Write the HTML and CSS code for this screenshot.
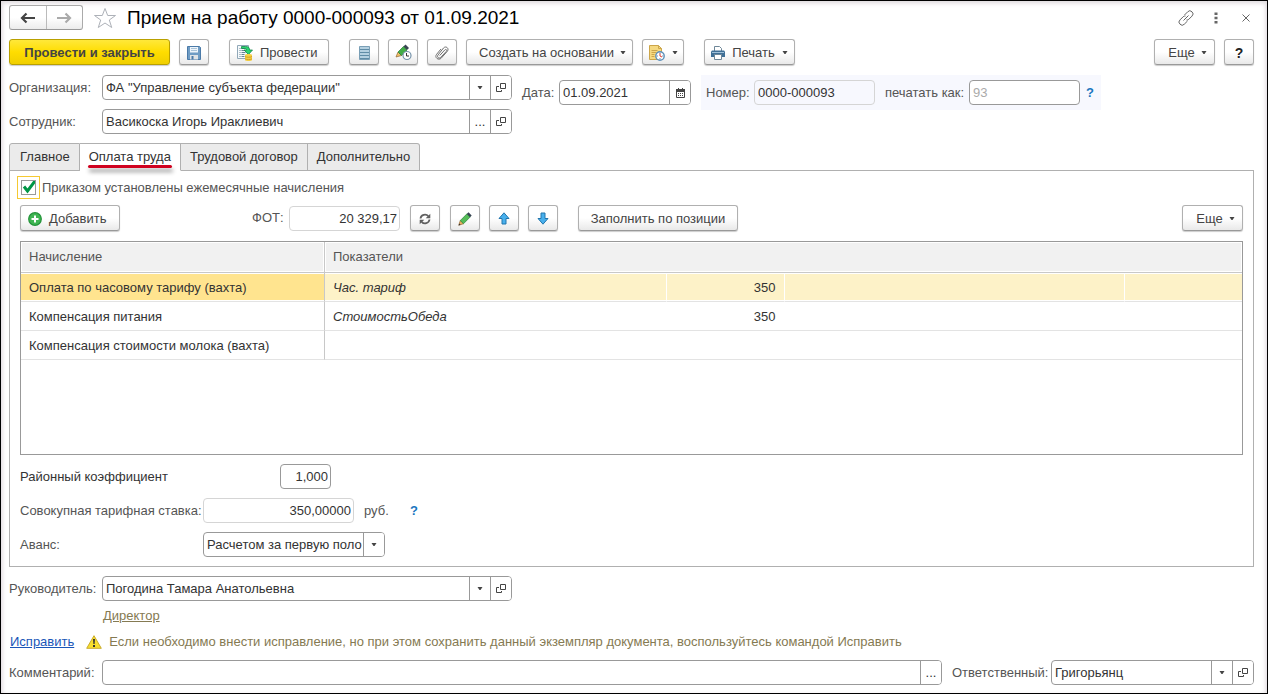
FILE: index.html
```html
<!DOCTYPE html>
<html lang="ru">
<head>
<meta charset="utf-8">
<meta name="viewport" content="width=device-width, initial-scale=1">
<title>Прием на работу</title>
<link rel="stylesheet" href="styles.css">
</head>
<body>
<svg class="sprite" aria-hidden="true">
  <symbol id="i-open" viewBox="0 0 11 11"><path d="M4.500 1.500h5v5h-5zM3 4.500H.5v5h5V8" fill="none" stroke="#444"/></symbol>
  <symbol id="i-caret" viewBox="0 0 6 4"><path d="M.5 0h5L3.500 3h-1z" fill="#444"/></symbol>
</svg>
<main class="window">
  <header class="titlebar">
    <div class="nav">
      <button type="button" aria-label="Назад"><svg width="16" height="12" viewBox="0 0 16 12"><path d="M2 6h13M6.500 1.500 2 6l4.500 4.500" fill="none" stroke="#444" stroke-width="2.200"/></svg></button>
      <button type="button" aria-label="Вперед"><svg width="16" height="12" viewBox="0 0 16 12"><path d="M1 6h13M9.500 1.500 14 6l-4.500 4.500" fill="none" stroke="#aaa" stroke-width="2.200"/></svg></button>
    </div>
    <button type="button" class="plain star" aria-label="Избранное"><svg width="24" height="22" viewBox="0 0 24 22"><path d="M12 1.500 14.700 8.500H22.500L16.300 13 18.700 20.500 12 16 5.300 20.500 7.700 13 1.500 8.500H9.300Z" fill="#fff" stroke="#adb1b8"/></svg></button>
    <h1>Прием на работу 0000-000093 от 01.09.2021</h1>
    <div class="win-actions">
      <button type="button" class="plain" aria-label="Ссылка"><svg width="16" height="16" viewBox="0 0 16 16"><g fill="none" stroke="#666"><path d="M6.500 5 9.700 1.800a2.900 2.900 0 0 1 4.300 0 2.900 2.900 0 0 1 0 4.300L10.800 9.300a2.700 2.700 0 0 1-2.300.7"/><path d="M9.500 11 6.300 14.200a2.900 2.900 0 0 1-4.300 0 2.900 2.900 0 0 1 0-4.300L5.200 6.700A2.700 2.700 0 0 1 7.500 6M5.500 10.500l5-5"/></g></svg></button>
      <button type="button" class="plain" aria-label="Меню"><svg width="4" height="12" viewBox="0 0 4 12"><path d="M.5.5h3v2.500h-3zM.5 4.700h3v2.500h-3zM.5 9h3v2.500h-3z" fill="#666"/></svg></button>
      <button type="button" class="plain" aria-label="Закрыть"><svg width="8" height="8" viewBox="0 0 8 8"><path d="m.5.5 7 7m0-7-7 7" stroke="#666"/></svg></button>
    </div>
  </header>

  <div class="toolbar">
    <button type="button" class="btn primary">Провести и закрыть</button>
    <button type="button" class="btn icon" aria-label="Записать"><svg width="14" height="14" viewBox="0 0 14 14"><path d="M.5.500h12l1 1v12H.5z" fill="#6f9cc4" stroke="#4a7aa8"/><path d="M3 1h8v5.500H3z" fill="#eef5fb"/><path d="M4 2.500h6M4 4.500h6" stroke="#a9c3d8"/><path d="M3 9h8v4.500H3z" fill="#dfe3e6"/><path d="M4.500 10h2v3.500h-2z" fill="#4a7aa8"/></svg></button>
    <button type="button" class="btn post apart"><svg width="16" height="16" viewBox="0 0 16 16"><path d="M.5.500h11v13H.5z" fill="#f5f9fb" stroke="#91a8b8"/><path d="M2.500 3.500h1m1 0h4m-6 2h1m1 0h4m-6 2h1m1 0h4m-6 2h1m1 0h3m-5 2h1m1 0h3" stroke="#678296"/><path d="M4.500 1.500h4c3 0 4 1 4 3.500h3L11.500 9.500 7 5h2.500c0-1.200-.5-1.500-2-1.500h-3z" fill="#28d66f" stroke="#18834a" stroke-width=".8"/><path d="M8 10c0-1.300 7-1.300 7 0v5c0 1.300-7 1.300-7 0z" fill="#f4cf46"/><path d="M8 11.500c1 1 6 1 7 0m-7 2.300c1 1 6 1 7 0" fill="none" stroke="#c9951c" stroke-width=".8"/></svg>Провести</button>
    <button type="button" class="btn icon apart" aria-label="Реестр"><svg width="11" height="14" viewBox="0 0 11 14"><path d="M.5.500h10v13H.5z" fill="#b4d0e0" stroke="#7a9fb6"/><path d="M1 3.500h9M1 6.500h9M1 9.500h9M1 12.500h9" stroke="#5f8ca6"/></svg></button>
    <button type="button" class="btn icon" aria-label="Изменить с датой"><svg width="17" height="17" viewBox="0 0 17 17"><path d="m1 13 2-5 3.500 3.500z" fill="#f2c268" stroke="#8f6530" stroke-width=".7"/><path d="m3 8 5.500-5.500L12 6l-5.500 5.500z" fill="#43ad48" stroke="#267a35" stroke-width=".7"/><path d="m8.500 2.500 2-2 3.500 3.500-2 2z" fill="#394552"/><circle cx="12" cy="11.500" r="4" fill="#fff" stroke="#7592aa" stroke-width="1.200"/><path d="M11.500 9v3h2.500" fill="none" stroke="#333"/></svg></button>
    <button type="button" class="btn icon" aria-label="Файлы"><svg width="14" height="14" viewBox="0 0 14 14"><path d="m4.700 9.500 5-5.500c1.300-1.300 2.600 0 1.500 1.500L5.700 11.500c-1.900 1.500-4.200-.5-2.700-2.500L8.500 2c2.300-2.500 6 .3 3.900 3.200L6.200 12.200C3.500 14.800-.9 11.500 1.600 8.300L6 3" fill="none" stroke="#707070"/></svg></button>
    <button type="button" class="btn create">Создать на основании<svg class="caret"><use href="#i-caret"/></svg></button>
    <button type="button" class="btn dated" aria-label="Напоминание"><svg width="16" height="16" viewBox="0 0 16 16"><path d="M.5.500h9l3 3v11H.5z" fill="#f5d981" stroke="#cca64a"/><path d="M9.500.5v3h3M2.500 5.500h6m-6 2h5m-5 2h3m-3 2h3" fill="none" stroke="#cca64a"/><circle cx="11" cy="11" r="4.200" fill="#fff" stroke="#5b8fb9" stroke-width="1.400"/><path d="M11 7.800v1m0 4.400v1M7.800 11h1m4.400 0h1" stroke="#587b98"/><path d="M11 8.500V11l2 1" fill="none" stroke="#df3c2f"/></svg><svg class="caret"><use href="#i-caret"/></svg></button>
    <button type="button" class="btn print apart"><svg width="14" height="14" viewBox="0 0 14 14"><path d="M3.500 5V.500h5l2 2V5" fill="#fff" stroke="#6e8798"/><path d="M1 4.500h12l1 1V11H0V5.500z" fill="#3f6f96"/><path d="M1 6.500h12" stroke="#9fc0d8"/><path d="M3.500 8.500h7v5h-7z" fill="#fff" stroke="#6e8798"/></svg>Печать<svg class="caret"><use href="#i-caret"/></svg></button>
    <button type="button" class="btn more push">Еще<svg class="caret"><use href="#i-caret"/></svg></button>
    <button type="button" class="btn icon help">?</button>
  </div>

  <section class="head">
    <div class="head-main">
      <div class="row"><label class="w-main" for="org">Организация:</label><div class="field wide"><input id="org" value="ФА &quot;Управление субъекта федерации&quot;"><button type="button" aria-label="Выбрать организацию"><svg class="caret"><use href="#i-caret"/></svg></button><button type="button" aria-label="Открыть организацию"><svg class="open"><use href="#i-open"/></svg></button></div></div>
      <div class="row"><label class="w-main" for="emp">Сотрудник:</label><div class="field wide"><input id="emp" value="Васикоска Игорь Ираклиевич"><button type="button" aria-label="Выбрать сотрудника">...</button><button type="button" aria-label="Открыть сотрудника"><svg class="open"><use href="#i-open"/></svg></button></div></div>
    </div>
    <div class="row date-row"><label class="w-date" for="date">Дата:</label><div class="field date"><input id="date" value="01.09.2021"><button type="button" aria-label="Календарь"><svg width="9" height="10" viewBox="0 0 9 10"><path d="M.5 1.500h8v8h-8z" fill="#fff" stroke="#444"/><path d="M0 1h9v3H0zM2 0h1v1H2zM6 0h1v1H6z" fill="#444"/><path d="M2 5.500h1m1 0h1m1 0h1m-5 2h1m1 0h1m1 0h1" stroke="#444"/></svg></button></div></div>
    <div class="number">
      <label class="w-num" for="num">Номер:</label><div class="field muted num"><input id="num" value="0000-000093" readonly></div>
      <label class="w-print" for="printas">печатать как:</label><div class="field printas"><input id="printas" placeholder="93"></div>
      <button type="button" class="plain hint">?</button>
    </div>
  </section>

  <nav class="tabs" role="tablist">
    <button type="button" role="tab">Главное</button>
    <button type="button" role="tab" class="active" aria-selected="true">Оплата труда</button>
    <button type="button" role="tab">Трудовой договор</button>
    <button type="button" role="tab">Дополнительно</button>
  </nav>

  <section class="panel">
    <div class="check"><input type="checkbox" id="monthly" checked><label for="monthly">Приказом установлены ежемесячные начисления</label></div>
    <div class="toolbar commands">
      <button type="button" class="btn add"><svg width="14" height="14" viewBox="0 0 14 14"><circle cx="7" cy="7" r="6.300" fill="#3fb552" stroke="#239239" stroke-width="1.200"/><path d="M7 3.500v7M3.500 7h7" stroke="#fff" stroke-width="2"/></svg>Добавить</button>
      <div class="row fot"><label class="w-fot" for="fot">ФОТ:</label><div class="field muted sum"><input id="fot" value="20 329,17" readonly></div></div>
      <button type="button" class="btn icon" aria-label="Обновить"><svg width="12" height="12" viewBox="0 0 12 12"><path d="M1.500 5.500C2 1.500 7 .5 9.300 3.200M10.500 6.500C10 10.500 5 11.500 2.700 8.800" fill="none" stroke="#606060" stroke-width="1.800"/><path d="M11.300.7v4.600H6.700zM.7 11.300V6.700h4.600z" fill="#606060"/></svg></button>
      <button type="button" class="btn icon edit" aria-label="Изменить"><svg width="14" height="14" viewBox="0 0 14 14"><path d="m.8 13.200 1.500-4.700 3.200 3.200z" fill="#eab464" stroke="#946329" stroke-width=".7"/><path d="M2.300 8.500 9 1.800 12.200 5l-6.700 6.700z" fill="#55bd59" stroke="#2c8639" stroke-width=".7"/><path d="m8.800 2 1.700-1.700 3.200 3.200L12 5.200z" fill="#364452"/><path d="m.6 13.400.6-2 1.400 1.400z" fill="#333"/></svg></button>
      <button type="button" class="btn icon" aria-label="Вверх"><svg width="12" height="13" viewBox="0 0 12 13"><path d="m6 .8 5 5.700H8v5.500H4V6.500H1z" fill="#48b0ed" stroke="#2376ad"/></svg></button>
      <button type="button" class="btn icon" aria-label="Вниз"><svg width="12" height="13" viewBox="0 0 12 13"><path d="m6 12.200 5-5.700H8V1H4v5.500H1z" fill="#48b0ed" stroke="#2376ad"/></svg></button>
      <button type="button" class="btn fill apart">Заполнить по позиции</button>
      <button type="button" class="btn more push">Еще<svg class="caret"><use href="#i-caret"/></svg></button>
    </div>
    <div class="grid">
      <table>
        <colgroup><col class="c-name"><col><col class="c-val"><col><col class="c-val"></colgroup>
        <thead><tr><th>Начисление</th><th colspan="4">Показатели</th></tr></thead>
        <tbody>
          <tr class="selected"><td>Оплата по часовому тарифу (вахта)</td><td class="ind">Час. тариф</td><td class="val">350</td><td></td><td></td></tr>
          <tr><td>Компенсация питания</td><td class="ind">СтоимостьОбеда</td><td class="val">350</td><td></td><td></td></tr>
          <tr><td>Компенсация стоимости молока (вахта)</td><td></td><td></td><td></td><td></td></tr>
        </tbody>
      </table>
    </div>
    <div class="totals">
      <div class="row"><label class="w-coef" for="coef">Районный коэффициент</label><div class="field coef"><input id="coef" value="1,000"></div></div>
      <div class="row"><label class="w-rate" for="rate">Совокупная тарифная ставка:</label><div class="field muted rate"><input id="rate" value="350,00000" readonly></div><span class="unit">руб.</span><button type="button" class="plain hint">?</button></div>
      <div class="row"><label class="w-rate" for="advance">Аванс:</label><div class="field advance"><select id="advance"><option>Расчетом за первую половину месяца</option></select><span class="drop"><svg class="caret"><use href="#i-caret"/></svg></span></div></div>
    </div>
  </section>

  <footer>
    <div class="row"><label class="w-main" for="boss">Руководитель:</label><div class="field wide"><input id="boss" value="Погодина Тамара Анатольевна"><button type="button" aria-label="Выбрать руководителя"><svg class="caret"><use href="#i-caret"/></svg></button><button type="button" aria-label="Открыть руководителя"><svg class="open"><use href="#i-open"/></svg></button></div></div>
    <a class="position" href="#">Директор</a>
    <div class="fix"><a href="#">Исправить</a><svg width="16" height="14" viewBox="0 0 16 14"><path d="M8 .7 15.300 13.300H.7z" fill="#f7de2d" stroke="#c9ab2e" stroke-linejoin="round"/><path d="M7 4h2l-.4 5H7.400zM7 10h2v2H7z" fill="#333"/></svg><span>Если необходимо внести исправление, но при этом сохранить данный экземпляр документа, воспользуйтесь командой Исправить</span></div>
    <div class="row"><label class="w-main" for="comment">Комментарий:</label><div class="field grow"><input id="comment"><button type="button" aria-label="Открыть комментарий">...</button></div><label class="w-resp" for="resp">Ответственный:</label><div class="field resp"><input id="resp" value="Григорьянц"><button type="button" aria-label="Выбрать ответственного"><svg class="caret"><use href="#i-caret"/></svg></button><button type="button" aria-label="Открыть ответственного"><svg class="open"><use href="#i-open"/></svg></button></div></div>
  </footer>
</main>
</body>
</html>
```

FILE: styles.css
```css
* { box-sizing: border-box; }
body {
  margin: 0;
  font: 13px/16px "Liberation Sans", Arial, sans-serif;
  color: #333;
  background: #fff;
}
button, input, select { font: inherit; color: inherit; margin: 0; }
button { padding: 0; cursor: pointer; }
svg { display: block; flex: none; }
.sprite { position: absolute; width: 0; height: 0; }
.caret { width: 6px; height: 4px; }
.open { width: 11px; height: 11px; }

.window {
  display: flex;
  flex-direction: column;
  min-height: 100vh;
  padding: 4px 13px 8px 8px;
  border: 1px solid #000;
  box-shadow: inset 0 4px 5px -2px #ddd8dc, inset 4px 0 5px -3px #ddd8dc, inset -4px 0 5px -3px #ddd8dc;
}

.titlebar { display: flex; align-items: center; height: 25px; margin-bottom: 9px; }
.nav { display: flex; width: 74px; height: 25px; border: 1px solid #aaa; border-bottom-color: #999; border-radius: 3px; background: linear-gradient(#fff 50%, #ececec); }
.nav button { flex: 1; display: grid; place-items: center; border: 0; background: none; }
.nav button + button { border-left: 1px solid #bbb; }
.plain { border: 0; background: none; display: grid; place-items: center; }
.star { margin: 0 10px; }
h1 { margin: 0; font-size: 19px; line-height: 24px; font-weight: 400; color: #000; }
.win-actions { display: flex; align-items: center; gap: 14px; margin-left: auto; }
.win-actions .plain { width: 16px; height: 16px; }

.toolbar { display: flex; gap: 9px; height: 26px; margin-bottom: 10px; }
.btn {
  display: flex;
  align-items: center;
  justify-content: center;
  height: 26px;
  padding-top: 1px;
  border: 1px solid #b0b0b0;
  border-bottom-color: #999;
  border-radius: 3px;
  background: linear-gradient(#fff 50%, #e9e9e9);
  box-shadow: 0 1px 1px #ccc;
  color: #444;
  white-space: nowrap;
}
.icon { width: 30px; }
.primary { width: 161px; font-weight: 700; border-color: #b9a000; background: linear-gradient(#ffe83a, #fd0 50%, #f0cf00); }
.post, .add { width: 100px; gap: 7px; justify-content: flex-start; padding-left: 7px; }
.create { width: 167px; gap: 6px; padding-left: 6px; }
.dated { width: 42px; gap: 7px; }
.print { width: 91px; gap: 7px; }
.more { width: 61px; gap: 6px; padding-left: 6px; }
.help { font-size: 14px; font-weight: 700; color: #222; }
.apart { margin-left: 11px; }
.push { margin-left: auto; }

.row { display: flex; align-items: center; }
label { flex: none; color: #555; white-space: nowrap; }
.field { display: flex; flex: none; height: 25px; border: 1px solid #999; border-radius: 4px; background: #fff; overflow: hidden; }
.field input, .field select { flex: 1; width: 0; min-width: 0; height: 23px; padding: 0 3px; border: 0; outline: 0; background: none; }
.field input::placeholder { color: #aaa; opacity: 1; }
.field button, .drop { flex: none; width: 21px; display: grid; place-items: center; border: 0; border-left: 1px solid #999; background: #fff; }
.muted { border-color: #d5d5d5; background: none; }
.wide { width: 410px; }
.date { width: 132px; }
.num { width: 121px; }
.printas { width: 111px; }
.w-main { width: 93px; }
.w-date { width: 37px; }
.w-num { width: 48px; }
.w-print { width: 84px; margin-left: 10px; }
.w-fot { width: 37px; }
.w-coef { width: 260px; color: #333; }
.w-rate { width: 183px; }
.w-resp { width: 109px; padding-left: 10px; }
.hint { color: #1a76bf; font-weight: 700; }

.head { display: flex; align-items: flex-start; margin-bottom: 9px; }
.head-main { display: grid; gap: 9px; }
.date-row { margin: 5px 10px 0; }
.number { display: flex; align-items: center; width: 400px; height: 35px; padding: 0 5px; background: #f7f8fe; }
.number .hint { margin-left: 6px; }

.tabs { display: flex; margin-bottom: -1px; z-index: 1; }
.tabs button { position: relative; height: 28px; padding: 0 9px; border: 1px solid #b0b0b0; border-left-width: 0; background: #ebebeb; }
.tabs button:first-child { padding-left: 10px; border-left-width: 1px; border-top-left-radius: 3px; }
.tabs button:last-child { border-top-right-radius: 3px; }
.tabs .active { background: #fff; border-bottom-color: #fff; }
.tabs .active::after { content: ""; position: absolute; left: 8px; right: 8px; bottom: 2px; height: 3px; border-radius: 2px; background: #d0021f; box-shadow: 1px 4px 4px #999; }

.panel { display: flex; flex-direction: column; flex: 1; padding: 5px 10px 9px; border: 1px solid #b0b0b0; margin-bottom: 9px; }
.check { display: flex; align-items: center; gap: 6px; height: 23px; padding-left: 1px; margin-bottom: 6px; }
.check input {
  appearance: none;
  width: 15px;
  height: 15px;
  margin: 0;
  border: 1px solid #999;
  outline: 1px solid #f5c932;
  outline-offset: 3px;
  background: #fff url("data:image/svg+xml,%3Csvg xmlns='http://www.w3.org/2000/svg' viewBox='0 0 15 15'%3E%3Cpath d='M3 6.500 6.500 11 14 1' fill='none' stroke='%23009646' stroke-width='3'/%3E%3C/svg%3E") border-box center / 15px 15px;
}
.fot { margin: 0 1px 0 123px; }
.sum { width: 111px; }
.sum input, .coef input, .rate input { text-align: right; padding-right: 2px; }
.edit { margin-left: 1px; }
.fill { width: 160px; }

.grid { flex: 1; min-height: 120px; border: 1px solid #999; margin-bottom: 9px; }
table { width: 100%; table-layout: fixed; border-collapse: separate; border-spacing: 0; }
.c-name { width: 304px; }
.c-val { width: 118px; }
th, td { padding: 1px 8px 0; text-align: left; font-weight: 400; white-space: nowrap; }
th { height: 31px; padding-top: 0; color: #555; background: #f1f1f1; border-bottom: 1px solid #c8c8c8; box-shadow: inset 0 0 0 1px #fff; }
td { height: 29px; border-bottom: 1px solid #e3e3e3; }
th:first-child, td:first-child { border-right: 1px solid #c8c8c8; }
.selected td { background: #fdf2c8; box-shadow: inset 0 1px #fff, inset 0 -1px #fff; }
.selected td:first-child { background: #ffe48f; }
.selected td:nth-child(n+3) { border-left: 1px solid #fff; }
.ind { font-style: italic; }
.val { text-align: right; }

.totals { display: grid; gap: 9px; }
.coef { width: 51px; }
.rate { width: 151px; }
.unit { width: 46px; margin-left: 10px; color: #555; }
.advance { width: 182px; }
.field select { appearance: none; padding-right: 1px; overflow: hidden; }

.position { display: block; width: max-content; height: 20px; margin: 5px 0 6px 94px; line-height: 20px; color: #857a52; }
.fix { display: flex; align-items: center; height: 20px; margin-bottom: 8px; color: #857a52; }
.fix a { margin-left: 1px; color: #1a56b8; }
.fix svg { margin: 0 7px 0 12px; }
.grow { flex: 1; }
.resp { width: 203px; }
```
